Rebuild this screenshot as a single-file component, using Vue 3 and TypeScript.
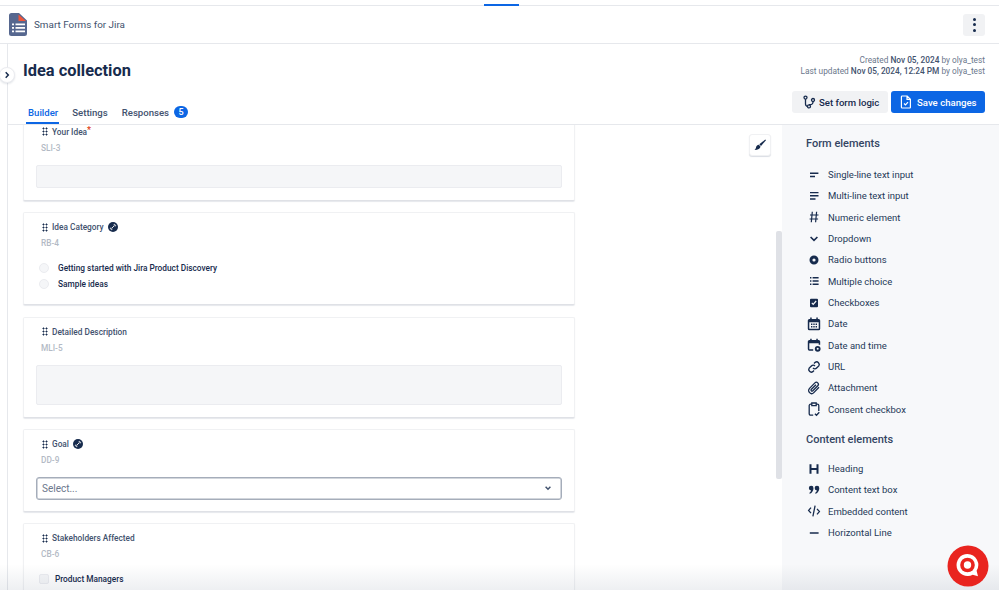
<script setup lang="ts">
interface Element { label: string; fill?: string; stroke?: string; sw?: number }

const formElements: Element[] = [
  { label: 'Single-line text input', stroke: 'M4 6.300h8.400M4 9.600h5', sw: 1.5 },
  { label: 'Multi-line text input', stroke: 'M4 4.600h8.500M4 7.800h8.500M4 11h5.500', sw: 1.4 },
  { label: 'Numeric element', stroke: 'M6.300 2.800 5.300 13.200M10.600 2.800 9.600 13.200M4 6h8.500M3.600 10h8.500', sw: 1.2 },
  { label: 'Dropdown', stroke: 'M4.600 6 8 9.400 11.400 6', sw: 1.6 },
  { label: 'Radio buttons', fill: 'M8 3.500a4.500 4.500 0 1 1 0 9 4.500 4.500 0 0 1 0-9Zm0 2.900a1.600 1.600 0 1 0 0 3.200 1.600 1.600 0 0 0 0-3.200Z' },
  { label: 'Multiple choice', fill: 'M4 4h1.400v1.500H4Zm0 3.200h1.400v1.500H4Zm0 3.200h1.400v1.500H4ZM6.600 4h6v1.500h-6Zm0 3.200h6v1.500h-6Zm0 3.200h6v1.500h-6Z' },
  { label: 'Checkboxes', fill: 'M5 3.800h6a1 1 0 0 1 1 1v6.400a1 1 0 0 1-1 1H5a1 1 0 0 1-1-1V4.800a1 1 0 0 1 1-1Zm5.600 2.600-.9-.8-2.500 2.800-1-1-.8.9 1.800 1.900Z' },
  { label: 'Date', fill: 'M4.200 1.600h1.500v1.300h4.600V1.600h1.500v1.300h.8a1.600 1.600 0 0 1 1.600 1.600v8.200a1.600 1.600 0 0 1-1.600 1.600H3.400a1.600 1.600 0 0 1-1.600-1.600V4.500a1.600 1.600 0 0 1 1.600-1.600h.8Zm-.9 4.700v6.200c0 .2 0 .2.2.2h9c.2 0 .2 0 .2-.2V6.300ZM5 7.500h1.400v1.400H5Zm2.300 0h1.400v1.400H7.300Zm2.300 0H11v1.400H9.600ZM5 10h1.400v1.400H5Zm2.300 0h1.400v1.400H7.300Zm2.300 0H11v1.400H9.600Z' },
  { label: 'Date and time', fill: 'M4.200 1.800h1.500V3h4.600V1.800h1.500V3h.8a1.600 1.600 0 0 1 1.600 1.600v3.200h-1.500V6.200H3.300v6h3.900v1.500H3.400a1.600 1.600 0 0 1-1.600-1.600V4.600A1.600 1.600 0 0 1 3.400 3h.8ZM11.700 8.900a2.900 2.900 0 1 1 0 5.800 2.900 2.900 0 0 1 0-5.800Zm0 1.900a1 1 0 1 0 0 2 1 1 0 0 0 0-2Z' },
  { label: 'URL', stroke: 'M7 9.100a2.500 2.500 0 0 0 3.600 0l2.200-2.200a2.600 2.600 0 0 0-3.600-3.600L8 4.400M9 6.900a2.500 2.500 0 0 0-3.600 0L3.200 9.100a2.600 2.600 0 0 0 3.600 3.600L8 11.600', sw: 1.4 },
  { label: 'Attachment', stroke: 'M13 7.300 7.800 12.600a3 3 0 0 1-4.300-4.200l5.400-5.500a2 2 0 0 1 2.900 2.800L6.600 10.900a1 1 0 0 1-1.400-1.400L10 4.700', sw: 1.3 },
  { label: 'Consent checkbox', stroke: 'M5.500 3.200H4.600a1.400 1.400 0 0 0-1.400 1.400v8.200a1.400 1.400 0 0 0 1.400 1.400h2.600M10.500 3.200h.9a1.400 1.400 0 0 1 1.400 1.400v5.500M5.800 2h4.400v2.600H5.800ZM8.900 12.700l1.600 1.600 2.800-3', sw: 1.3 }
]

const contentElements: Element[] = [
  { label: 'Heading', stroke: 'M4.500 3.200v9.600M11.500 3.200v9.600M4.500 8h7', sw: 2 },
  { label: 'Content text box', fill: 'M5.200 3.800a2.300 2.300 0 0 1 2.300 2.400c0 2.600-1.400 4.500-3.600 5.600l-.7-.9c1-.7 1.700-1.600 1.900-2.500a2.300 2.300 0 0 1 .1-4.600Zm5.800 0a2.300 2.300 0 0 1 2.300 2.400c0 2.600-1.400 4.500-3.600 5.600l-.7-.9c1-.7 1.700-1.600 1.900-2.500a2.300 2.300 0 0 1 .1-4.600Z' },
  { label: 'Embedded content', stroke: 'M5 4.600 2.600 7.400 5 10.200M11 5.800l2.400 2.800-2.400 2.800M9.100 2.600 6.900 13.400', sw: 1.3 },
  { label: 'Horizontal Line', stroke: 'M3.800 8h8.800', sw: 1.5 }
]
</script>

<template>
  <div class="page">
    <div class="strip"><span class="strip-mark"></span></div>

    <header class="app-bar">
      <div class="brand">
        <svg class="logo" width="18" height="23" viewBox="0 0 18 23">
          <path d="M2.500 0H10l8 7.500v13a2.500 2.500 0 0 1-2.500 2.500h-13A2.500 2.500 0 0 1 0 20.500v-18A2.500 2.500 0 0 1 2.500 0Z" fill="#56678f" />
          <path d="M9.500 1.500 17 8H9.500Z" fill="#f0563b" />
          <path d="M3 10.500h2v1.800H3Zm0 3.500h2v1.800H3Zm0 3.500h2v1.800H3ZM6.500 10.500H16v1.800H6.500Zm0 3.500H16v1.800H6.500Zm0 3.500H16v1.800H6.500Z" fill="#fff" />
        </svg>
        <span class="brand-name">Smart Forms for Jira</span>
      </div>
      <button class="kebab" type="button" aria-label="More">
        <i></i><i></i><i></i>
      </button>
    </header>

    <div class="main">
      <div class="rail"></div>
      <button class="collapse" type="button" aria-label="Expand">
        <svg width="8" height="8" viewBox="0 0 8 8"><path d="M2.700 1.300 5.300 4 2.700 6.700" fill="none" stroke="#172b4d" stroke-width="1.500" /></svg>
      </button>

      <div class="content">
        <section class="page-head">
          <div class="head-left">
            <h1>Idea collection</h1>
            <nav class="tabs">
              <a class="tab active">Builder</a>
              <a class="tab">Settings</a>
              <a class="tab">Responses<span class="badge">5</span></a>
            </nav>
          </div>
          <div class="head-right">
            <div class="meta">
              <p>Created <b>Nov 05, 2024</b> by olya_test</p>
              <p>Last updated <b>Nov 05, 2024, 12:24 PM</b> by olya_test</p>
            </div>
            <div class="actions">
              <button class="btn logic" type="button">
                <svg width="14" height="14" viewBox="0 0 14 14" fill="none" stroke="#172b4d" stroke-width="1.300">
                  <circle cx="3.500" cy="2.600" r="1.500" /><circle cx="7" cy="11.400" r="1.500" /><circle cx="11" cy="5" r="1.500" />
                  <path d="M3.500 4.100v4.800a2.500 2.500 0 0 0 2.200 2.400M11 6.500v.6a2.500 2.500 0 0 1-2.500 2.500H7" />
                </svg>
                Set form logic
              </button>
              <button class="btn primary" type="button">
                <svg width="14" height="14" viewBox="0 0 14 14" fill="none" stroke="#fff" stroke-width="1.200">
                  <path d="M3.200 1h5l3.200 3.200v8a.8.800 0 0 1-.8.8H3.200a.8.800 0 0 1-.8-.8V1.800a.8.800 0 0 1 .8-.8ZM8 1v3.400h3.400M5 8.500l1.500 1.500 2.500-2.800" />
                </svg>
                Save changes
              </button>
            </div>
          </div>
        </section>

        <div class="work">
          <div class="canvas">
            <div class="cards">
              <article class="card">
                <div class="field-head"><span class="dots"></span><span class="label">Your Idea<em>*</em></span></div>
                <div class="code">SLI-3</div>
                <div class="input"></div>
              </article>

              <article class="card">
                <div class="field-head">
                  <span class="dots"></span><span class="label">Idea Category</span>
                  <svg class="linked" width="10" height="10" viewBox="0 0 10 10"><circle cx="5" cy="5" r="5" fill="#172b4d" /><path d="M3.400 6.600 6.600 3.400M2.800 5.600a1.100 1.100 0 0 0 1.600 1.600M5.600 2.800a1.100 1.100 0 0 1 1.600 1.600" stroke="#fff" stroke-width=".9" fill="none" /></svg>
                </div>
                <div class="code">RB-4</div>
                <div class="options">
                  <div class="option"><span class="radio"></span>Getting started with Jira Product Discovery</div>
                  <div class="option"><span class="radio"></span>Sample ideas</div>
                </div>
              </article>

              <article class="card">
                <div class="field-head"><span class="dots"></span><span class="label">Detailed Description</span></div>
                <div class="code">MLI-5</div>
                <div class="input tall"></div>
              </article>

              <article class="card short">
                <div class="field-head">
                  <span class="dots"></span><span class="label">Goal</span>
                  <svg class="linked" width="10" height="10" viewBox="0 0 10 10"><circle cx="5" cy="5" r="5" fill="#172b4d" /><path d="M3.400 6.600 6.600 3.400M2.800 5.600a1.100 1.100 0 0 0 1.600 1.600M5.600 2.800a1.100 1.100 0 0 1 1.600 1.600" stroke="#fff" stroke-width=".9" fill="none" /></svg>
                </div>
                <div class="code">DD-9</div>
                <div class="select">
                  <span>Select...</span>
                  <svg width="10" height="10" viewBox="0 0 10 10"><path d="M2.600 3.800 5 6.200l2.400-2.400" fill="none" stroke="#42526e" stroke-width="1.500" /></svg>
                </div>
              </article>

              <article class="card">
                <div class="field-head"><span class="dots"></span><span class="label">Stakeholders Affected</span></div>
                <div class="code">CB-6</div>
                <div class="options">
                  <div class="option check"><span class="box"></span>Product Managers</div>
                </div>
              </article>
            </div>

            <button class="brush" type="button" aria-label="Style">
              <svg width="14" height="14" viewBox="0 0 14 14"><path d="M12.300 1.500 13 2.200 8 8 6.300 6.300Z" fill="#172b4d" /><path d="M5.800 6.800 7.500 8.500C7.300 10.500 5 12 1.500 12c1.300-1 1.300-1.700 1.600-3 .3-1.200 1.400-2 2.700-2.200Z" fill="#172b4d" /></svg>
            </button>
            <div class="scrollbar"></div>
          </div>

          <aside class="palette">
            <h2>Form elements</h2>
            <ul>
              <li v-for="item in formElements" :key="item.label">
                <svg width="16" height="16" viewBox="0 0 16 16">
                  <path v-if="item.fill" :d="item.fill" fill="#172b4d" fill-rule="evenodd" />
                  <path v-if="item.stroke" :d="item.stroke" fill="none" stroke="#172b4d" :stroke-width="item.sw" />
                </svg>
                {{ item.label }}
              </li>
            </ul>
            <h2 class="second">Content elements</h2>
            <ul>
              <li v-for="item in contentElements" :key="item.label">
                <svg width="16" height="16" viewBox="0 0 16 16">
                  <path v-if="item.fill" :d="item.fill" fill="#172b4d" fill-rule="evenodd" />
                  <path v-if="item.stroke" :d="item.stroke" fill="none" stroke="#172b4d" :stroke-width="item.sw" />
                </svg>
                {{ item.label }}
              </li>
            </ul>
          </aside>
        </div>
      </div>
    </div>

    <div class="fade"></div>
    <button class="chat" type="button" aria-label="Chat">
      <svg width="42" height="42" viewBox="0 0 42 42">
        <circle cx="21" cy="21" r="20.500" fill="#e9241f" />
        <path d="M20.500 9a11 11 0 1 0 5.200 20.700l5.300 1.500-1.400-5.400A11 11 0 0 0 20.500 9Z" fill="#fff" />
        <circle cx="20.500" cy="20" r="7.300" fill="#e9241f" />
        <circle cx="20.500" cy="20" r="3.700" fill="#fff" />
      </svg>
    </button>
  </div>
</template>

<style scoped>
.page {
  position: relative;
  width: 999px;
  height: 590px;
  overflow: hidden;
  display: flex;
  flex-direction: column;
  background: #fff;
  color: #172b4d;
  font-family: Roboto, "Liberation Sans", sans-serif;
}
.strip {
  height: 6px;
  flex: none;
  box-sizing: border-box;
  border-bottom: 1px solid #e6e8ec;
  display: flex;
  align-items: flex-end;
  padding-left: 484px;
}
.strip-mark {
  width: 35px;
  height: 2px;
  margin-bottom: -1px;
  background: #0c66e4;
}
.app-bar {
  height: 38px;
  flex: none;
  box-sizing: border-box;
  border-bottom: 1px solid #e6e8ec;
  display: flex;
  align-items: center;
  justify-content: space-between;
  padding: 0 14px 0 9px;
}
.brand { display: flex; align-items: center; gap: 7px; }
.logo { display: block; }
.brand-name { font-size: 9.900px; font-weight: 400; color: #42526e; }
.kebab {
  width: 22px;
  height: 22px;
  border: 0;
  padding: 0;
  border-radius: 3px;
  background: #f1f2f4;
  display: flex;
  flex-direction: column;
  align-items: center;
  justify-content: center;
  gap: 2.500px;
}
.kebab i { width: 3px; height: 3px; border-radius: 50%; background: #172b4d; }
.main { flex: 1; display: flex; position: relative; min-height: 0; }
.rail { width: 8px; flex: none; box-sizing: border-box; border-right: 1px solid #e6e8ec; }
.collapse {
  position: absolute;
  left: -1px;
  top: 23px;
  width: 16px;
  height: 16px;
  padding: 0;
  border: 1px solid #ebecf0;
  border-radius: 50%;
  background: #fff;
  box-shadow: 0 1px 2px rgba(9, 30, 66, .12);
  display: flex;
  align-items: center;
  justify-content: center;
}
.content { flex: 1; min-width: 0; display: flex; flex-direction: column; }
.page-head {
  height: 81px;
  flex: none;
  box-sizing: border-box;
  border-bottom: 1px solid #e6e8ec;
  display: flex;
  justify-content: space-between;
  padding: 0 14px 0 15px;
}
.head-left { display: flex; flex-direction: column; justify-content: space-between; }
h1 { margin: 16px 0 0; font-size: 16.400px; line-height: 22px; font-weight: 700; color: #172b4d; }
.tabs { display: flex; gap: 14px; padding-left: 5px; }
.tab {
  position: relative;
  height: 22px;
  font-size: 9.600px;
  line-height: 22px;
  font-weight: 500;
  color: #42526e;
  display: flex;
  align-items: flex-start;
}
.tab.active { color: #0c66e4; }
.tab.active::after {
  content: "";
  position: absolute;
  left: -2px;
  right: -1px;
  bottom: 0;
  height: 2px;
  background: #0c66e4;
}
.badge {
  width: 14px;
  height: 12px;
  margin: 4px 0 0 5px;
  border-radius: 6px;
  background: #0c66e4;
  color: #fff;
  font-size: 9px;
  line-height: 12px;
  text-align: center;
}
.head-right { display: flex; flex-direction: column; align-items: flex-end; }
.meta { margin-top: 11px; font-size: 8.300px; line-height: 10.500px; color: #6b778c; text-align: right; }
.meta p { margin: 0; }
.meta b { font-weight: 500; color: #42526e; }
.actions { margin-top: 15px; display: flex; gap: 3px; }
.btn {
  height: 22px;
  box-sizing: border-box;
  border: 0;
  border-radius: 3px;
  padding: 0 0 0 10px;
  background: #f1f2f4;
  color: #172b4d;
  font-family: inherit;
  font-size: 9.600px;
  font-weight: 500;
  display: flex;
  align-items: center;
  gap: 3px;
  width: 94px;
}
.btn.logic { width: 96px; }
.btn.primary { background: #0c66e4; color: #fff; padding-left: 8px; gap: 4px; }
.work { flex: 1; display: flex; min-height: 0; }
.canvas { position: relative; flex: 1; min-width: 0; overflow: hidden; padding-left: 15px; }
.cards {
  width: 552px;
  margin-top: -8.500px;
  display: flex;
  flex-direction: column;
  gap: 11.500px;
}
.card {
  box-sizing: border-box;
  flex: none;
  border: 1px solid #f0f1f3;
  border-bottom-color: #dfe1e6;
  box-shadow: 0 1px 1px rgba(9, 30, 66, .1);
  border-radius: 2px;
  padding: 8px 12px 12px;
  background: #fff;
}
.card.short { padding-bottom: 11px; }
.field-head { display: flex; align-items: center; height: 12px; padding-left: 6px; }
.dots {
  width: 6px;
  height: 9px;
  margin-right: 4px;
  background-image: radial-gradient(circle, #172b4d .9px, transparent 1.100px);
  background-size: 3px 3px;
}
.label { font-size: 8.300px; line-height: 12px; font-weight: 500; color: #42526e; }
.label em { font-style: normal; color: #de350b; font-size: 9px; vertical-align: 2px; line-height: 0; }
.linked { margin-left: 4px; }
.code { margin-top: 4px; padding-left: 5px; font-size: 8.300px; line-height: 12px; color: #b3bac5; font-weight: 500; }
.input {
  margin-top: 11px;
  height: 23px;
  box-sizing: border-box;
  background: #f5f6f8;
  border: 1px solid #ebecf0;
  border-radius: 2px;
}
.input.tall { height: 40px; }
.options { margin-top: 11px; }
.option {
  height: 16px;
  display: flex;
  align-items: center;
  padding-left: 3px;
  font-size: 8.300px;
  font-weight: 500;
  color: #172b4d;
}
.radio, .box {
  width: 10px;
  height: 10px;
  flex: none;
  box-sizing: border-box;
  margin-right: 9px;
  background: #f5f6f8;
  border: 1px solid #ebecf0;
  border-radius: 50%;
}
.box { margin-right: 6px; border-radius: 2px; }
.select {
  margin-top: 10.500px;
  height: 23px;
  box-sizing: border-box;
  border: 1px solid #a5adba;
  box-shadow: inset 0 0 0 .5px #a5adba;
  border-radius: 3px;
  display: flex;
  align-items: center;
  justify-content: space-between;
  padding: 0 8px 0 5px;
  font-size: 10px;
  color: #6b778c;
}
.brush {
  position: absolute;
  top: 9px;
  right: 11px;
  width: 22px;
  height: 22px;
  padding: 0;
  border: 1px solid #f0f1f3;
  border-radius: 3px;
  background: #fff;
  box-shadow: 0 1px 1px rgba(9, 30, 66, .15);
  display: flex;
  align-items: center;
  justify-content: center;
}
.scrollbar {
  position: absolute;
  top: 106px;
  right: 0;
  width: 6px;
  height: 248px;
  border-radius: 2px;
  background: #dfe1e6;
}
.palette {
  width: 217px;
  flex: none;
  box-sizing: border-box;
  padding: 12px 0 0 24px;
  background: #f7f8fa;
}
h2 { margin: 0 0 13px; font-size: 11px; line-height: 14px; font-weight: 500; color: #344563; }
h2.second { margin-top: 13px; margin-bottom: 11px; }
ul { list-style: none; margin: 0; padding: 0; }
li {
  height: 21.330px;
  display: flex;
  align-items: center;
  gap: 6px;
  font-size: 9.500px;
  color: #253858;
}
li svg { flex: none; }
.fade {
  position: absolute;
  left: 0;
  right: 0;
  bottom: 0;
  height: 26px;
  pointer-events: none;
  background: linear-gradient(to bottom, rgba(9, 30, 66, 0), rgba(9, 30, 66, .07));
}
.chat {
  position: absolute;
  left: 947px;
  top: 545px;
  width: 42px;
  height: 42px;
  padding: 0;
  border: 0;
  background: none;
}
.chat svg { display: block; }
</style>
